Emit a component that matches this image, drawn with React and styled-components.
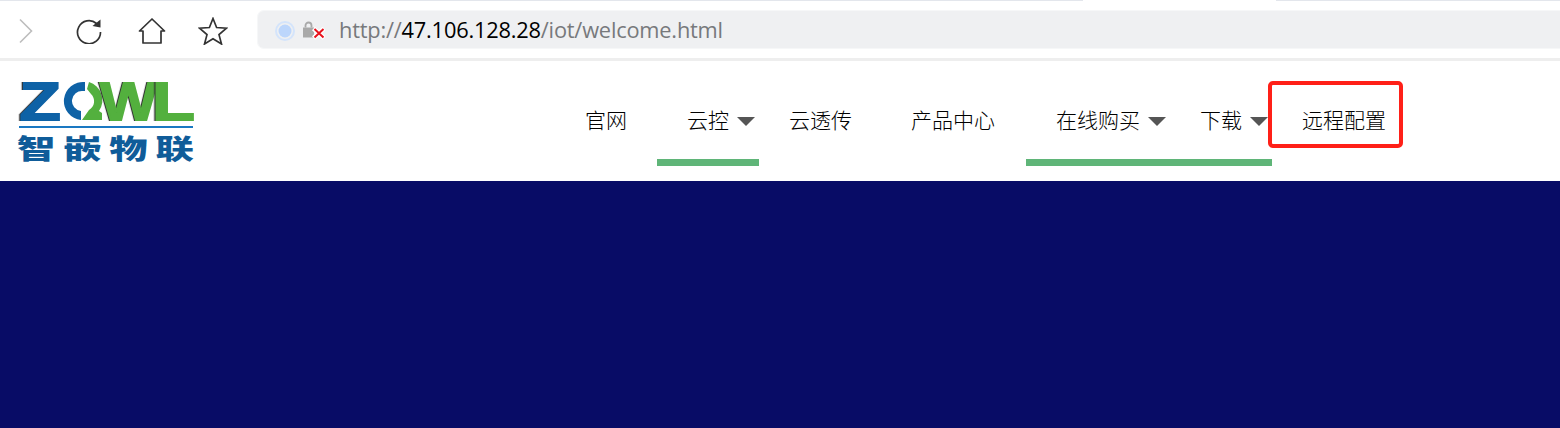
import React from "react";
import styled, { createGlobalStyle } from "styled-components";

const Global = createGlobalStyle`
  html, body { margin: 0; padding: 0; background: #fff; overflow: hidden; }
  #root { width: 1560px; height: 428px; }
`;

const Page = styled.div`
  position: relative;
  width: 1560px;
  height: 428px;
  display: flex;
  flex-direction: column;
  background: #fff;
  overflow: hidden;
`;

const TabEdge = styled.div`
  display: grid;
  grid-template-columns: 1083px 193px 1fr;
  height: 1px;
  flex: none;
`;

const EdgePart = styled.div`
  background: ${(p) => (p.$open ? "#fff" : "#e3e6ec")};
`;

const Toolbar = styled.div`
  display: flex;
  align-items: center;
  height: 57px;
  flex: none;
  padding-left: 17px;
  border-bottom: 3px solid #eeeeee;
  box-sizing: content-box;
`;

const ToolIcon = styled.svg`
  display: block;
  flex: none;
  margin-top: 2px;
  margin-right: ${(p) => p.$gap}px;
`;

const AddressBar = styled.div`
  flex: 1;
  height: 39px;
  display: flex;
  align-items: center;
  background: #eff0f2;
  border: 1px solid #f6f7f8;
  border-right: none;
  border-radius: 7px 0 0 7px;
  padding-left: 17px;
  box-sizing: border-box;
`;

const SecurityIcon = styled.svg`
  display: block;
  flex: none;
`;

const UrlText = styled.div`
  margin: 0 0 1px 14px;
  font: 400 21.8px "Open Sans", "Liberation Sans", sans-serif;
  letter-spacing: -0.2px;
  color: #77797c;
  white-space: nowrap;
`;

const UrlHost = styled.span`
  color: #000;
`;

const Header = styled.header`
  height: 120px;
  flex: none;
  display: flex;
  background: #fff;
`;

const LogoBox = styled.div`
  width: 555px;
  flex: none;
  padding: 19px 0 0 17px;
  box-sizing: border-box;
`;

const LogoLetter = styled.text`
  font-family: "Liberation Sans", sans-serif;
  font-weight: 700;
  font-size: 54px;
  stroke-width: 1.8px;
  fill: ${(p) => p.$color};
  stroke: ${(p) => p.$color};
  filter: drop-shadow(-1px 0.5px 0 #333);
`;

const LogoName = styled.text`
  font-family: "Noto Sans CJK SC", sans-serif;
  font-weight: 900;
  font-size: 27px;
  letter-spacing: 5.5px;
  fill: #0f5c99;
`;

const Nav = styled.nav`
  display: flex;
  align-items: flex-start;
`;

const NavItem = styled.div`
  width: ${(p) => p.$w}px;
  height: 78px;
  padding: 20px 0 0 30px;
  display: flex;
  align-items: center;
  gap: 8px;
  border-bottom: 7px solid ${(p) => (p.$active ? "#5fb578" : "transparent")};
  font: 300 21px "Noto Sans CJK SC", "Noto Sans", sans-serif;
  color: #000;
  line-height: 1;
  white-space: nowrap;
`;

const NavLabel = styled.span`
  margin-bottom: 2px;
`;

const Caret = styled.i`
  display: block;
  margin-top: 3px;
  width: 0;
  height: 0;
  border-left: 9px solid transparent;
  border-right: 9px solid transparent;
  border-top: 9px solid #555;
`;

const Highlight = styled.div`
  position: absolute;
  left: 1268px;
  top: 81px;
  width: 135px;
  height: 67px;
  border: 4px solid #ff2018;
  border-radius: 5px;
  box-sizing: border-box;
`;

const Banner = styled.main`
  flex: 1;
  background: #080c66;
`;

const Logo = () => (
  <svg width="180" height="84" viewBox="0 0 180 84">
    <LogoLetter $color="#0e62a6" transform="translate(2.5 39.5) scale(1.25 1)">Z</LogoLetter>
    <path d="M68 2A19 19 0 1 0 64 40V31A10 10 0 0 1 66 11H68Z" fill="#0e62a6" />
    <path d="M72 2A19 19 0 0 1 82 31L85 33V40H65L72 30A10 10 0 0 0 74 14L70 9Z" fill="#53b03e" />
    <LogoLetter $color="#53b03e" transform="translate(83 39.5) scale(1.12 1)">W</LogoLetter>
    <LogoLetter $color="#53b03e" transform="translate(135 39.5) scale(1.3 1)">L</LogoLetter>
    <rect x="2" y="46" width="174" height="2" fill="#1a78c2" />
    <LogoName transform="translate(0 79) scale(1.42 1)">智嵌物联</LogoName>
  </svg>
);

const items = [
  { label: "官网", w: 72 },
  { label: "云控", w: 72, caret: true, active: true },
  { label: "云透传", w: 92 },
  { label: "产品中心", w: 115 },
  { label: "在线购买", w: 114, caret: true, active: true },
  { label: "下载", w: 72, caret: true, active: true },
  { label: "远程配置", w: 114 },
];

export default function App() {
  return (
    <Page>
      <Global />
      <TabEdge>
        <EdgePart />
        <EdgePart $open />
        <EdgePart />
      </TabEdge>
      <Toolbar>
        <ToolIcon $gap={41} width="18" height="26" viewBox="0 0 18 26" fill="none" stroke="#bdbdbd" strokeWidth="1.6">
          <path d="M3 1.5 14.5 13 3 24.5" />
        </ToolIcon>
        <ToolIcon $gap={36} width="26" height="26" viewBox="0 0 26 26" fill="none">
          <path d="M20.5 5.5A11.5 11.5 0 1 0 24.5 14" stroke="#333" strokeWidth="1.7" />
          <path d="M24.5 1.5V9.5L16.5 8Z" fill="#333" />
        </ToolIcon>
        <ToolIcon $gap={32} width="28" height="26" viewBox="0 0 28 26" fill="none" stroke="#333" strokeWidth="1.7" strokeLinejoin="round">
          <path d="M1.5 13 14 1 26.5 13H23V25H5V13Z" />
        </ToolIcon>
        <ToolIcon $gap={29} width="30" height="28" viewBox="0 0 30 28" fill="none" stroke="#333" strokeWidth="1.7">
          <path d="M15 1.5 18.6 10.5 28.5 11.2 21 17.6 23.5 27 15 21.8 6.5 27 9 17.6 1.5 11.2 11.4 10.5Z" />
        </ToolIcon>
        <AddressBar>
          <SecurityIcon width="50" height="24" viewBox="0 0 50 24" fill="none">
            <circle cx="10" cy="13" r="9" stroke="#d4e4fb" strokeWidth="2" fill="#eff0f2" />
            <circle cx="10" cy="13" r="6.5" fill="#bcd6fc" />
            <rect x="28" y="9.5" width="11" height="10" fill="#a9a9a9" />
            <path d="M30.5 9.5V7.5a3 3 0 0 1 6 0v2" stroke="#a9a9a9" strokeWidth="1.8" />
            <path d="M38.5 10.5 49 20M49 10.5 38.5 20" stroke="#fff" strokeWidth="4.5" />
            <path d="M39.5 11 48.5 19.5M48.5 11 39.5 19.5" stroke="#e8121c" strokeWidth="2" />
          </SecurityIcon>
          <UrlText>
            http://<UrlHost>47.106.128.28</UrlHost>/iot/welcome.html
          </UrlText>
        </AddressBar>
      </Toolbar>
      <Header>
        <LogoBox>
          <Logo />
        </LogoBox>
        <Nav>
          {items.map((it) => (
            <NavItem key={it.label} $w={it.w} $active={it.active}>
              <NavLabel>{it.label}</NavLabel>
              {it.caret && <Caret />}
            </NavItem>
          ))}
        </Nav>
      </Header>
      <Banner />
      <Highlight />
    </Page>
  );
}
